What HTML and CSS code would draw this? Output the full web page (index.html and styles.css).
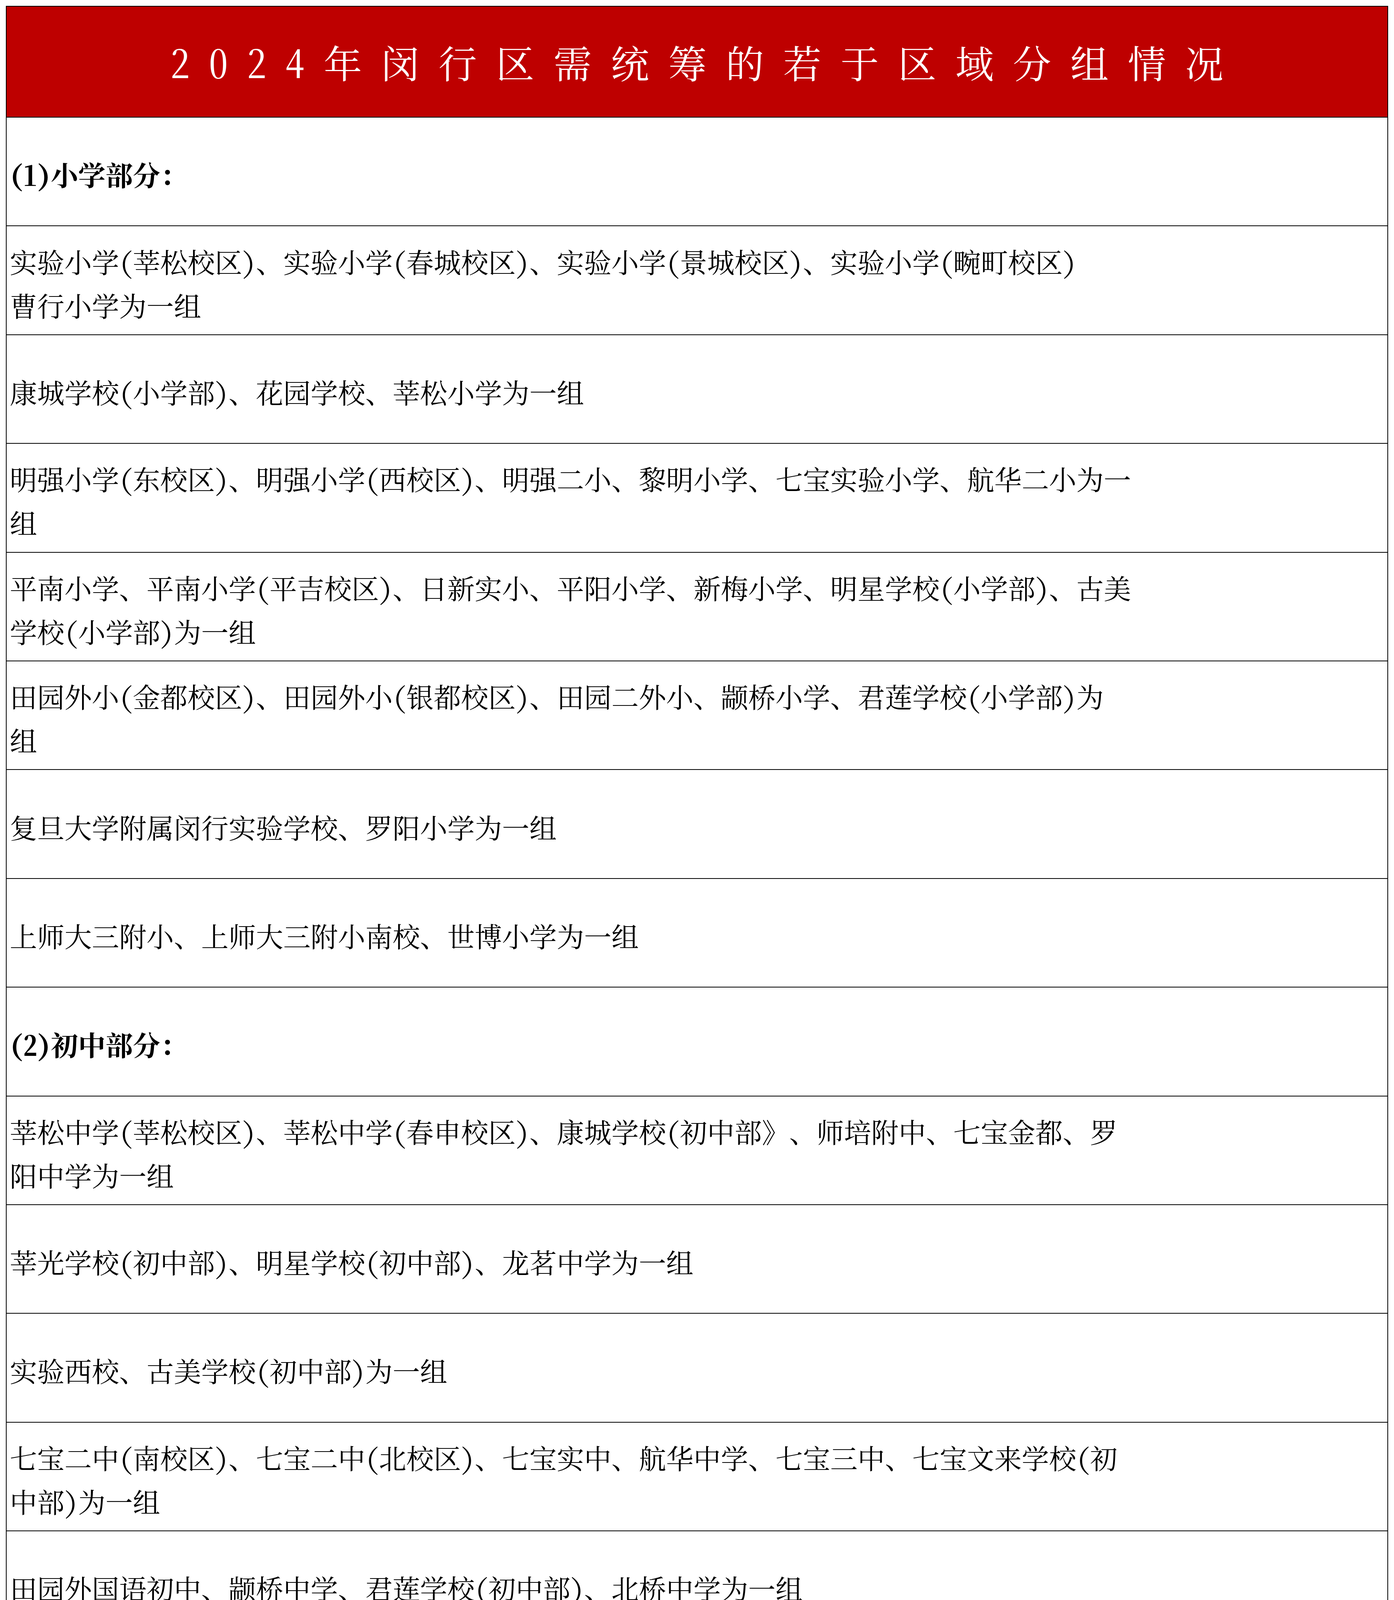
FILE: index.html
```html
<!DOCTYPE html>
<html lang="zh-CN">
<head>
<meta charset="utf-8">
<title>2024年闵行区需统筹的若于区域分组情况</title>
<link rel="stylesheet" href="styles.css">
</head>
<body>
<div class="sheet">
  <div class="title-row"><h1 class="title">2024年闵行区需统筹的若于区域分组情况</h1></div>
  <div class="row section"><p class="cell">(1)小学部分：</p></div>
  <div class="row"><p class="cell">实验小学(莘松校区)、实验小学(春城校区)、实验小学(景城校区)、实验小学(畹町校区)<br>曹行小学为一组</p></div>
  <div class="row"><p class="cell">康城学校(小学部)、花园学校、莘松小学为一组</p></div>
  <div class="row"><p class="cell">明强小学(东校区)、明强小学(西校区)、明强二小、黎明小学、七宝实验小学、航华二小为一<br>组</p></div>
  <div class="row"><p class="cell">平南小学、平南小学(平吉校区)、日新实小、平阳小学、新梅小学、明星学校(小学部)、古美<br>学校(小学部)为一组</p></div>
  <div class="row"><p class="cell">田园外小(金都校区)、田园外小(银都校区)、田园二外小、颛桥小学、君莲学校(小学部)为<br>组</p></div>
  <div class="row"><p class="cell">复旦大学附属闵行实验学校、罗阳小学为一组</p></div>
  <div class="row"><p class="cell">上师大三附小、上师大三附小南校、世博小学为一组</p></div>
  <div class="row section"><p class="cell">(2)初中部分：</p></div>
  <div class="row"><p class="cell">莘松中学(莘松校区)、莘松中学(春申校区)、康城学校(初中部》、师培附中、七宝金都、罗<br>阳中学为一组</p></div>
  <div class="row"><p class="cell">莘光学校(初中部)、明星学校(初中部)、龙茗中学为一组</p></div>
  <div class="row"><p class="cell">实验西校、古美学校(初中部)为一组</p></div>
  <div class="row"><p class="cell">七宝二中(南校区)、七宝二中(北校区)、七宝实中、航华中学、七宝三中、七宝文来学校(初<br>中部)为一组</p></div>
  <div class="row"><p class="cell">田园外国语初中、颛桥中学、君莲学校(初中部)、北桥中学为一组</p></div>
  <div class="row empty"><div class="blank blank-left"></div><div class="blank"></div></div>
</div>
</body>
</html>
```
FILE: styles.css
```css
html, body {
  margin: 0;
  padding: 0;
  background: #ffffff;
}

.sheet {
  margin: 15px 0 0 15px;
  width: 3538px;
  box-sizing: border-box;
  border: 2px solid #000000;
  border-bottom: none;
  font-family: "Noto Serif CJK SC", "Noto Sans CJK SC", serif;
  font-feature-settings: "hwid" 1;
  color: #000000;
}

.title-row {
  height: 284px;
  box-sizing: border-box;
  background: #be0000;
  border-bottom: 2px solid #000000;
  display: flex;
  align-items: center;
  justify-content: center;
}

.title {
  margin: 0;
  padding-left: 49px;
  font-size: 98px;
  font-weight: normal;
  letter-spacing: 49px;
  line-height: 1;
  color: #ffffff;
  white-space: nowrap;
}

.row {
  height: 278.4px;
  box-sizing: border-box;
  border-bottom: 2px solid #000000;
  display: flex;
  align-items: center;
  padding: 14px 0 0 8px;
}

.cell {
  margin: 0;
  font-size: 70px;
  line-height: 112px;
  white-space: nowrap;
}

.section .cell {
  font-weight: bold;
}

.row.empty {
  height: 454px;
  padding: 0;
  display: grid;
  grid-template-columns: 2262px 1fr;
}

.blank-left {
  border-right: 2px solid #e4e4e4;
}
```
